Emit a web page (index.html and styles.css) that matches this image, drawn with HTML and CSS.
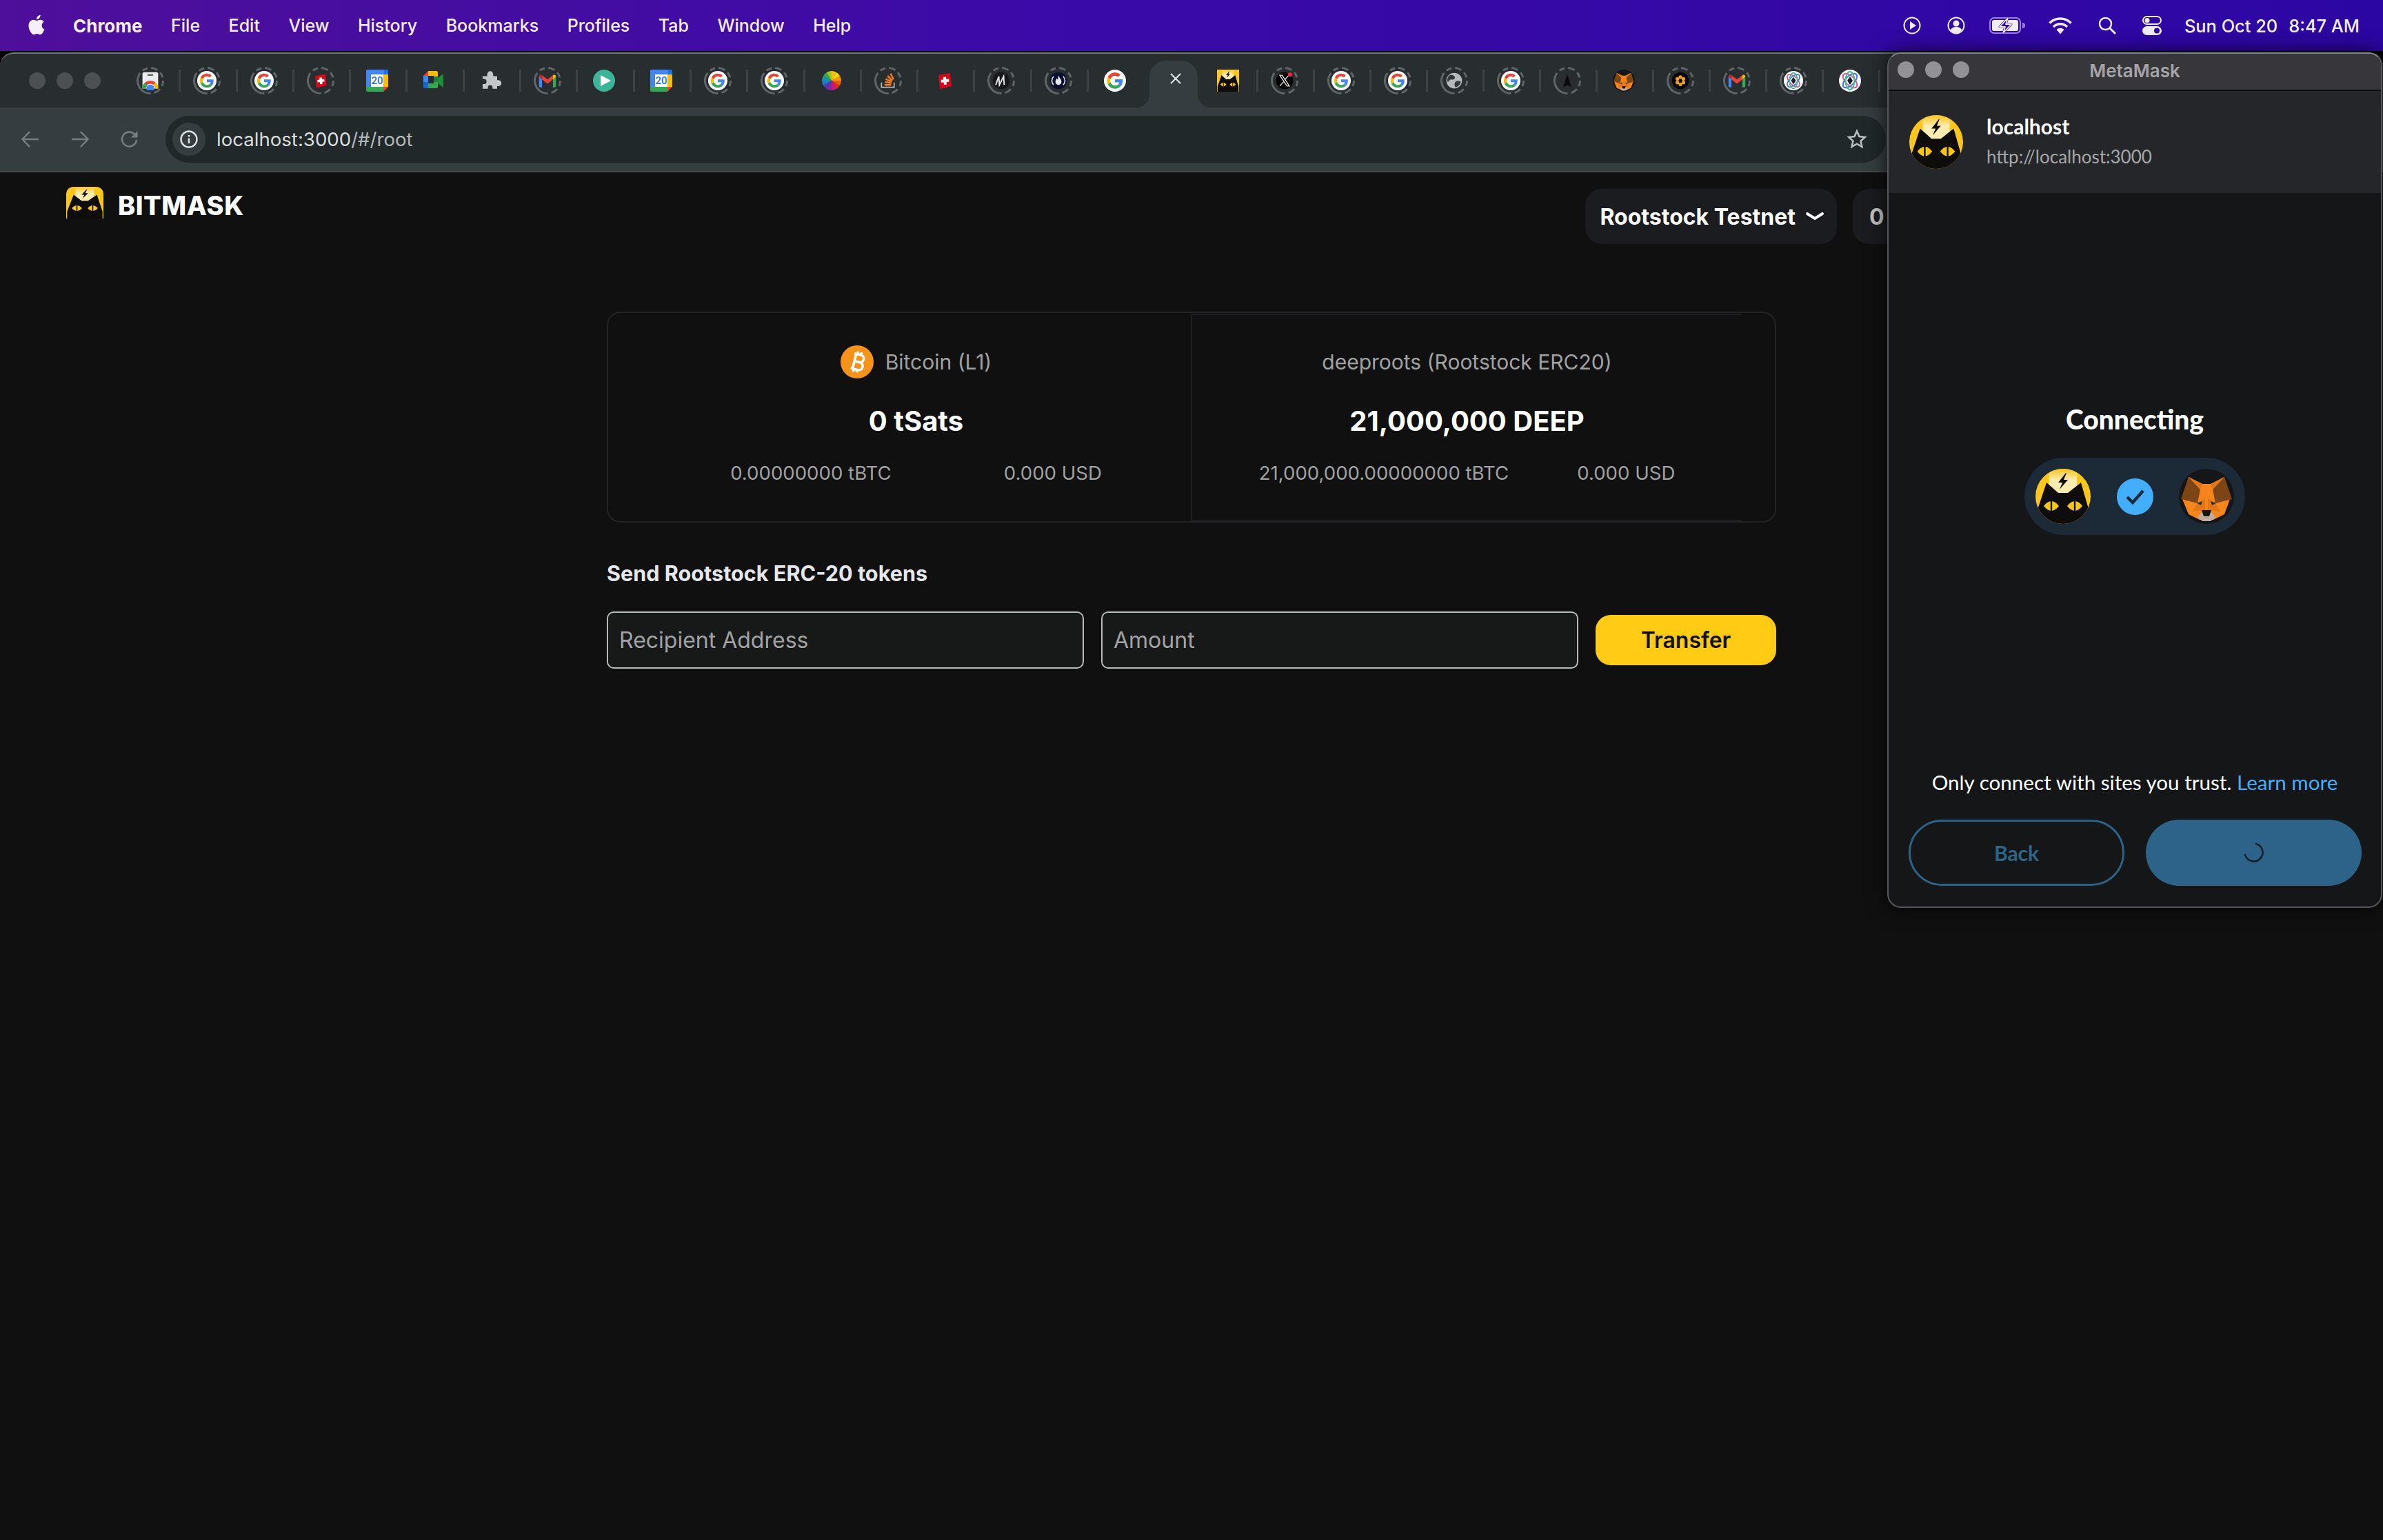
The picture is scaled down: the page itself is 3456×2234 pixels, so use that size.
FILE: index.html
```html
<!DOCTYPE html>
<html lang="en">
<head>
    <meta charset="UTF-8">
    <title>BitMask</title>
    <link rel="stylesheet" href="styles.css">
</head>
<body>
    <!-- shared icons -->
    <svg class="defs" width="0" height="0">
        <symbol id="ring" viewBox="0 0 40 40">
            <circle cx="20" cy="20" r="18.5" fill="none" stroke="#5f6669" stroke-width="3" stroke-dasharray="36 5 8 5 10 5 8 5 8 5 10 5 6 0" transform="rotate(105 20 20)"/>
        </symbol>
        <symbol id="g" viewBox="-9 -9 66 66">
            <circle cx="24" cy="24" r="33" fill="#fff"/>
            <path fill="#EA4335" d="M24 9.5c3.54 0 6.71 1.22 9.21 3.6l6.85-6.85C35.9 2.38 30.47 0 24 0 14.62 0 6.51 5.38 2.56 13.22l7.98 6.19C12.43 13.72 17.74 9.5 24 9.5z"/>
            <path fill="#4285F4" d="M46.98 24.55c0-1.57-.15-3.09-.38-4.55H24v9.02h12.94c-.58 2.96-2.26 5.48-4.78 7.18l7.73 6c4.51-4.18 7.09-10.36 7.09-17.65z"/>
            <path fill="#FBBC05" d="M10.53 28.59c-.48-1.45-.76-2.99-.76-4.59s.27-3.14.76-4.59l-7.98-6.19C.92 16.46 0 20.12 0 24c0 3.88.92 7.54 2.56 10.78l7.97-6.19z"/>
            <path fill="#34A853" d="M24 48c6.48 0 11.93-2.13 15.89-5.81l-7.73-6c-2.15 1.45-4.92 2.3-8.16 2.3-6.26 0-11.57-4.22-13.47-9.91l-7.98 6.19C6.51 42.62 14.62 48 24 48z"/>
        </symbol>
        <symbol id="store" viewBox="0 0 32 32">
            <path fill="#eceff1" d="M6 2h20a3 3 0 0 1 3 3v24H3V5a3 3 0 0 1 3-3z"/>
            <rect x="11" y="5" width="10" height="3" rx="1.5" fill="#5f6368"/>
            <path fill="#ea4335" d="M3 29a13 13 0 0 1 26 0h-5a8 8 0 0 0-16 0z"/>
            <path fill="#fbbc05" d="M21 22l3 7h5a13 13 0 0 0-4-10z"/>
            <path fill="#34a853" d="M3 29a13 13 0 0 1 4-10l4 5-3 5z"/>
            <circle cx="16" cy="29" r="6.5" fill="#4285f4"/>
        </symbol>
        <symbol id="flag" viewBox="0 0 32 32">
            <path fill="#d5091c" d="M7 8l17-3 2 19-17 4z"/>
            <path fill="#fff" d="M14 11l4-.5.3 3.5 3.700-.5.4 4-3.700.4.3 3.600-4 .5-.4-3.600-3.600.4-.4-4 3.700-.4z"/>
        </symbol>
        <symbol id="cal" viewBox="0 0 32 32">
            <path fill="#4285f4" d="M2 0h24v7H7v18H0V2a2 2 0 0 1 2-2z"/>
            <path fill="#1a73e8" d="M26 0h4a2 2 0 0 1 2 2v5h-6z"/>
            <rect x="25" y="7" width="7" height="18" fill="#fbbc04"/>
            <path fill="#34a853" d="M0 25h25v7H2a2 2 0 0 1-2-2z"/>
            <path fill="#ea4335" d="M25 25h7l-7 7z"/>
            <rect x="7" y="7" width="18" height="18" fill="#fff"/>
        </symbol>
        <symbol id="meet" viewBox="0 0 32 32">
            <path fill="#ea4335" d="M8 2L1 9h7z"/>
            <path fill="#4285f4" d="M1 9h7v9H1z"/>
            <path fill="#1967d2" d="M1 18h7v9H3a2 2 0 0 1-2-2z"/>
            <path fill="#fbbc04" d="M8 2h12a2 2 0 0 1 2 2v6h-6V9H8z"/>
            <path fill="#34a853" d="M8 20h8v-2h6v7a2 2 0 0 1-2 2H8z"/>
            <path fill="#1e8e3e" d="M22 12l8-6v20l-8-6z"/>
            <path fill="#188038" d="M16 10h6v8h-6z"/>
        </symbol>
        <symbol id="puzzle" viewBox="0 0 32 32">
            <path fill="#c4c7c9" d="M3 11h7V8a4.500 4.500 0 0 1 9 0v3h6v6h2a4.500 4.500 0 0 1 0 9h-2v4h-7v-2a3.500 3.500 0 0 0-7 0v2H3v-7h2a4 4 0 0 0 0-8H3z" transform="translate(1 -1) scale(.96)"/>
        </symbol>
        <symbol id="gmail" viewBox="0 0 32 32">
            <path fill="#4285f4" d="M2 9a3 3 0 0 1 5-2v20H4a2 2 0 0 1-2-2z"/>
            <path fill="#34a853" d="M30 9a3 3 0 0 0-5-2v20h3a2 2 0 0 0 2-2z"/>
            <path fill="#ea4335" d="M7 7l9 7 9-7v7l-9 7-9-7z"/>
            <path fill="#c5221f" d="M2 9l5 5V7a3 3 0 0 0-5 2z"/>
            <path fill="#fbbc04" d="M25 7v7l5-5a3 3 0 0 0-5-2z"/>
        </symbol>
        <symbol id="play" viewBox="0 0 32 32">
            <circle cx="16" cy="16" r="16" fill="#3cb497"/>
            <path fill="#fff" d="M11 8l15 8-15 8z"/>
        </symbol>
        <symbol id="wheel" viewBox="0 0 32 32">
            <path fill="#f6c400" d="M16 16V2a14 14 0 0 1 7 2z"/>
            <path fill="#ffd800" d="M16 16l7-12a14 14 0 0 1 5 5z"/>
            <path fill="#f59a00" d="M16 16l12-7a14 14 0 0 1 2 7z"/>
            <path fill="#ef5a12" d="M16 16h14a14 14 0 0 1-2 7z"/>
            <path fill="#e02b20" d="M16 16l12 7a14 14 0 0 1-5 5z"/>
            <path fill="#c4187a" d="M16 16l7 12a14 14 0 0 1-7 2z"/>
            <path fill="#7e2aa5" d="M16 16v14a14 14 0 0 1-7-2z"/>
            <path fill="#4a3bb0" d="M16 16L9 28a14 14 0 0 1-5-5z"/>
            <path fill="#2378c8" d="M16 16L4 23a14 14 0 0 1-2-7z"/>
            <path fill="#1c93a8" d="M16 16H2a14 14 0 0 1 2-7z"/>
            <path fill="#3bab4a" d="M16 16L4 9a14 14 0 0 1 5-5z"/>
            <path fill="#9cc821" d="M16 16L9 4a14 14 0 0 1 7-2z"/>
        </symbol>
        <symbol id="so" viewBox="0 0 32 32">
            <path fill="none" stroke="#b7babb" stroke-width="2" d="M5 19v8h21v-8"/>
            <path fill="none" stroke="#e87922" stroke-width="3" d="M10 23h11M10.500 18l11 2M12 13l10 5M15 8l8 8M20 4l5 10"/>
        </symbol>
        <symbol id="m" viewBox="0 0 32 32">
            <circle cx="16" cy="16" r="14" fill="#17181c"/>
            <path fill="none" stroke="#e6e6e6" stroke-width="2.200" d="M7 23l5-14 1 14 7-14 1 14"/>
        </symbol>
        <symbol id="flame" viewBox="0 0 32 32">
            <circle cx="16" cy="16" r="14" fill="#0c1030"/>
            <path fill="none" stroke="#d5d8e4" stroke-width="2" d="M8 9a10 10 0 0 0 0 14M24 9a10 10 0 0 1 0 14"/>
            <path fill="#e8e8f0" d="M16 7c1 4 5 6 5 11a5 5 0 0 1-10 0c0-3 2-4 2-6 1 1 2 2 2 3z"/>
        </symbol>
        <symbol id="x" viewBox="0 0 32 32">
            <circle cx="16" cy="16" r="14" fill="#000"/>
            <path fill="none" stroke="#e8e8e8" stroke-width="1.500" d="M8 7h4l12 18h-4zM23 7L16 15M15 17l-7 8"/>
            <circle cx="25" cy="6" r="3.500" fill="#ee2b36"/>
        </symbol>
        <symbol id="globe" viewBox="0 0 32 32">
            <circle cx="16" cy="16" r="13" fill="#b5b9bb"/>
            <path fill="#33393c" d="M7 8c5-3 9-1 10 2s-3 5-6 4-3 4-6 4c-1-4 0-7 2-10zM18 18c3-2 7-2 9 0-1 5-5 8-9 9-2-3-2-7 0-9z"/>
        </symbol>
        <symbol id="tri" viewBox="0 0 32 32">
            <path fill="#0a0a0a" d="M16 5l7 22-7-4-7 4z"/>
        </symbol>
        <symbol id="flower" viewBox="0 0 32 32">
            <circle cx="16" cy="16" r="14" fill="#050505"/>
            <g fill="#f0a020">
                <circle cx="16" cy="10" r="3"/><circle cx="11" cy="13" r="3"/><circle cx="21" cy="13" r="3"/>
                <circle cx="11" cy="19" r="3"/><circle cx="21" cy="19" r="3"/><circle cx="16" cy="22" r="3"/>
            </g>
        </symbol>
        <symbol id="orbit" viewBox="0 0 32 32">
            <circle cx="16" cy="16" r="16" fill="#fff"/>
            <g fill="none" stroke-width="2">
                <ellipse cx="16" cy="16" rx="13" ry="6.500" stroke="#e25a8f" transform="rotate(45 16 16)"/>
                <ellipse cx="16" cy="16" rx="13" ry="6.500" stroke="#3f7be8" transform="rotate(-45 16 16)"/>
                <ellipse cx="16" cy="16" rx="6.500" ry="13" stroke="#47b98a"/>
            </g>
            <path fill="#1c1c2a" d="M16 10l4 6-4 6-4-6z"/>
        </symbol>
        <symbol id="cat" viewBox="0 0 80 80" preserveAspectRatio="none">
            <defs>
                <linearGradient id="catbg" x1="0" y1="0" x2="0" y2="1">
                    <stop offset="0" stop-color="#fcc419"/>
                    <stop offset=".45" stop-color="#fff0c0"/>
                </linearGradient>
            </defs>
            <rect width="80" height="80" fill="#fcc61b"/>
            <path fill="url(#catbg)" d="M20 0h40v36H20z" opacity=".9"/>
            <path fill="#0e0d0b" d="M2 62L16 20 33 35H47L66 20 78 62V80H2z"/>
            <path fill="#0e0d0b" d="M44 6L33 20h6l-4 10 12-14h-6l4-10z"/>
            <path fill="#f9c614" d="M12 54q11-14 22 0-11 14-22 0zM46 54q11-14 22 0-11 14-22 0z"/>
            <path fill="#0e0d0b" d="M21.800 46h2.400v16h-2.400zM55.800 46h2.400v16h-2.400z"/>
        </symbol>
        <symbol id="fox" viewBox="0 0 80 80">
            <circle cx="40" cy="40" r="40" fill="#141618"/>
            <path fill="#f6851b" d="M14 12L34 22H46L66 12 74 44 66 66 50 74H30L14 66 5 44z"/>
            <path fill="#7d4513" d="M14 12L31 30 27 50 3 44zM66 12L49 30 53 50 77 44z"/>
            <path fill="#e2761b" d="M14 12L34 22 31 30zM66 12L46 22 49 30zM27 50L38 42V60L20 62zM53 50L42 42V60L60 62z"/>
            <path fill="#233447" d="M26 50L34 47 32 53zM54 50L46 47 48 53z"/>
            <path fill="#c0ad9e" d="M27 70L34 62H46L53 70 46 76H34z"/>
            <path fill="#161616" d="M33 60H47L44 69H36z"/>
        </symbol>
    </svg>

    <!-- mac menu bar -->
    <header class="menubar">
        <svg class="apple" viewBox="0 0 24 24"><path fill="#f4effb" d="M18.710 19.500c-.83 1.240-1.710 2.450-3.050 2.470-1.340.03-1.770-.79-3.290-.79-1.530 0-2 .77-3.270.82-1.310.05-2.300-1.320-3.140-2.530C4.250 17 2.940 12.450 4.700 9.390c.87-1.520 2.430-2.480 4.120-2.510 1.280-.02 2.500.87 3.290.87.78 0 2.260-1.070 3.810-.91.65.03 2.470.26 3.640 1.980-.09.06-2.170 1.280-2.150 3.810.03 3.020 2.650 4.030 2.680 4.040-.03.07-.42 1.440-1.380 2.830M13 3.500c.73-.83 1.940-1.460 2.940-1.500.13 1.170-.34 2.350-1.040 3.190-.69.85-1.830 1.510-2.950 1.420-.15-1.150.41-2.350 1.050-3.110z"/></svg>
        <nav class="menu">
            <span class="menu-app">Chrome</span>
            <span>File</span>
            <span>Edit</span>
            <span>View</span>
            <span>History</span>
            <span>Bookmarks</span>
            <span>Profiles</span>
            <span>Tab</span>
            <span>Window</span>
            <span>Help</span>
        </nav>
        <div class="status">
            <svg class="st" viewBox="0 0 28 28"><circle cx="14" cy="14" r="11.500" fill="none" stroke="#f1ecfa" stroke-width="2"/><path fill="#f1ecfa" d="M11 8l9 6-9 6z"/></svg>
            <svg class="st" viewBox="0 0 28 28"><circle cx="14" cy="14" r="11.500" fill="none" stroke="#f1ecfa" stroke-width="2"/><circle cx="14" cy="11" r="4.500" fill="#f1ecfa"/><path fill="#f1ecfa" d="M5.500 21c2-4 5-5 8.500-5s6.500 1 8.500 5a11 11 0 0 1-17 0z"/></svg>
            <svg class="st-bat" viewBox="0 0 52 28"><rect x="1" y="3" width="44" height="22" rx="6" fill="none" stroke="#9a82e0" stroke-width="2"/><rect x="4" y="6" width="38" height="16" rx="3" fill="#f1ecfa"/><path fill="#2f07a5" stroke="#2f07a5" stroke-width="3" stroke-linejoin="round" d="M27 3L15 16h8l-3 9 12-13h-8z"/><path fill="none" stroke="#f1ecfa" stroke-width="1.800" stroke-linejoin="round" d="M27 3L15 16h8l-3 9 12-13h-8z"/><path fill="#9a82e0" d="M48 10a4 4 0 0 1 0 8z"/></svg>
            <svg class="st-wifi" viewBox="0 0 36 28"><path fill="none" stroke="#f1ecfa" stroke-width="3.500" d="M2.500 10.500a22 22 0 0 1 31 0M8 16a14 14 0 0 1 20 0"/><path fill="#f1ecfa" d="M12.500 20a8 8 0 0 1 11 0L18 26.500z"/></svg>
            <svg class="st-search" viewBox="0 0 28 28"><circle cx="11.500" cy="11.500" r="8.500" fill="none" stroke="#f1ecfa" stroke-width="2.500"/><path stroke="#f1ecfa" stroke-width="3" d="M18 18l8 8"/></svg>
            <svg class="st-ctrl" viewBox="0 0 28 28"><rect x="1" y="1" width="26" height="11" rx="5.500" fill="none" stroke="#f1ecfa" stroke-width="2"/><circle cx="7" cy="6.500" r="3.500" fill="#f1ecfa"/><rect y="15" width="28" height="13" rx="6.500" fill="#f1ecfa"/><circle cx="21" cy="21.500" r="4" fill="#2f07a5"/></svg>
            <span class="clock"><span>Sun Oct 20</span><span>8:47 AM</span></span>
        </div>
    </header>

    <!-- chrome window -->
    <div class="browser">
        <div class="tabstrip">
            <div class="lights">
                <span></span><span></span><span></span>
            </div>
            <div class="tabs">
                <div class="tab"><span class="fav"><svg class="ring"><use href="#ring"/></svg><svg class="ico"><use href="#store"/></svg></span></div>
                <div class="tab"><span class="fav"><svg class="ring"><use href="#ring"/></svg><svg class="ico"><use href="#g"/></svg></span></div>
                <div class="tab"><span class="fav"><svg class="ring"><use href="#ring"/></svg><svg class="ico"><use href="#g"/></svg></span></div>
                <div class="tab"><span class="fav"><svg class="ring"><use href="#ring"/></svg><svg class="ico"><use href="#flag"/></svg></span></div>
                <div class="tab"><span class="fav"><svg class="ico big" viewBox="0 0 32 32"><use href="#cal"/><text x="16" y="21" class="cal-num">20</text></svg></span></div>
                <div class="tab"><span class="fav"><svg class="ico big"><use href="#meet"/></svg></span></div>
                <div class="tab"><span class="fav"><svg class="ico big"><use href="#puzzle"/></svg></span></div>
                <div class="tab"><span class="fav"><svg class="ring"><use href="#ring"/></svg><svg class="ico"><use href="#gmail"/></svg></span></div>
                <div class="tab"><span class="fav"><svg class="ico big"><use href="#play"/></svg></span></div>
                <div class="tab"><span class="fav"><svg class="ico big" viewBox="0 0 32 32"><use href="#cal"/><text x="16" y="21" class="cal-num">20</text></svg></span></div>
                <div class="tab"><span class="fav"><svg class="ring"><use href="#ring"/></svg><svg class="ico"><use href="#g"/></svg></span></div>
                <div class="tab"><span class="fav"><svg class="ring"><use href="#ring"/></svg><svg class="ico"><use href="#g"/></svg></span></div>
                <div class="tab"><span class="fav"><svg class="ico big"><use href="#wheel"/></svg></span></div>
                <div class="tab"><span class="fav"><svg class="ring"><use href="#ring"/></svg><svg class="ico"><use href="#so"/></svg></span></div>
                <div class="tab"><span class="fav"><svg class="ico big"><use href="#flag"/></svg></span></div>
                <div class="tab"><span class="fav"><svg class="ring"><use href="#ring"/></svg><svg class="ico"><use href="#m"/></svg></span></div>
                <div class="tab"><span class="fav"><svg class="ring"><use href="#ring"/></svg><svg class="ico"><use href="#flame"/></svg></span></div>
                <div class="tab no-sep"><span class="fav"><svg class="ico big"><use href="#g"/></svg></span></div>
                <div class="tab-active">
                    <svg class="tab-close" viewBox="0 0 16 16"><path stroke="#dfe1e2" stroke-width="2.200" d="M1 1l14 14M15 1L1 15"/></svg>
                </div>
                <div class="tab"><span class="fav"><svg class="ico big"><use href="#cat"/></svg></span></div>
                <div class="tab"><span class="fav"><svg class="ring"><use href="#ring"/></svg><svg class="ico"><use href="#x"/></svg></span></div>
                <div class="tab"><span class="fav"><svg class="ring"><use href="#ring"/></svg><svg class="ico"><use href="#g"/></svg></span></div>
                <div class="tab"><span class="fav"><svg class="ring"><use href="#ring"/></svg><svg class="ico"><use href="#g"/></svg></span></div>
                <div class="tab"><span class="fav"><svg class="ring"><use href="#ring"/></svg><svg class="ico"><use href="#globe"/></svg></span></div>
                <div class="tab"><span class="fav"><svg class="ring"><use href="#ring"/></svg><svg class="ico"><use href="#g"/></svg></span></div>
                <div class="tab"><span class="fav"><svg class="ring"><use href="#ring"/></svg><svg class="ico"><use href="#tri"/></svg></span></div>
                <div class="tab"><span class="fav"><svg class="ico big"><use href="#fox"/></svg></span></div>
                <div class="tab"><span class="fav"><svg class="ring"><use href="#ring"/></svg><svg class="ico"><use href="#flower"/></svg></span></div>
                <div class="tab"><span class="fav"><svg class="ring"><use href="#ring"/></svg><svg class="ico"><use href="#gmail"/></svg></span></div>
                <div class="tab"><span class="fav"><svg class="ring"><use href="#ring"/></svg><svg class="ico"><use href="#orbit"/></svg></span></div>
                <div class="tab"><span class="fav"><svg class="ico big"><use href="#orbit"/></svg></span></div>
            </div>
        </div>

        <div class="toolbar">
            <svg class="nav-btn" viewBox="0 0 28 28"><path fill="none" stroke="#787e80" stroke-width="2.500" d="M26 14H3M13 3L2.500 14 13 25"/></svg>
            <svg class="nav-btn" viewBox="0 0 28 28"><path fill="none" stroke="#787e80" stroke-width="2.500" d="M2 14h23M15 3l10.500 11L15 25"/></svg>
            <svg class="nav-btn" viewBox="0 0 28 28"><path fill="none" stroke="#787e80" stroke-width="2.500" d="M24 15a10.500 10.500 0 1 1-3-8.500L25 10"/><path fill="#787e80" d="M25.500 2v9.500H16z"/></svg>
            <div class="omnibox">
                <span class="site-info">
                    <svg viewBox="0 0 28 28"><circle cx="14" cy="14" r="11.500" fill="none" stroke="#e0e2e3" stroke-width="2.400"/><path fill="#e0e2e3" d="M12.700 12.500h2.600V20h-2.600zM12.700 8h2.600v2.600h-2.600z"/></svg>
                </span>
                <span class="url">localhost:3000<span class="url-path">/#/root</span></span>
                <svg class="star" viewBox="0 0 28 28"><path fill="none" stroke="#b9bdbe" stroke-width="2.400" d="M14 3l3.300 7.300 7.700.8-5.800 5.300 1.700 7.800L14 20.200 7.100 24.200l1.700-7.800L3 11.100l7.700-.8z"/></svg>
            </div>
        </div>

        <div class="page">
            <div class="page-header">
                <div class="logo">
                    <svg class="logo-icon"><use href="#cat"/></svg>
                    <span class="logo-text">BITMASK</span>
                </div>
                <button class="network">
                    Rootstock Testnet
                    <svg viewBox="0 0 28 16"><path fill="none" stroke="#fff" stroke-width="4" stroke-linecap="round" d="M3 4l11 7 11-7"/></svg>
                </button>
                <button class="balance">0</button>
            </div>

            <main class="content">
                <section class="card">
                    <div class="col col-left">
                        <div class="col-title">
                            <svg class="btc" viewBox="0 0 48 48">
                                <circle cx="24" cy="24" r="24" fill="#f7931a"/>
                                <g transform="rotate(14 24 24)" fill="none" stroke="#fff" stroke-width="3.600">
                                    <path d="M17 13h10a5.400 5.400 0 0 1 0 10.800H19M19 23.800h9a5.600 5.600 0 0 1 0 11.200H17M20 13v22M22 9v4M27 9v4M22 35v4M27 35v4"/>
                                </g>
                            </svg>
                            <span>Bitcoin (L1)</span>
                        </div>
                        <div class="amount">0 tSats</div>
                        <div class="sub sub-left">
                            <span>0.00000000 tBTC</span>
                            <span>0.000 USD</span>
                        </div>
                    </div>
                    <div class="col col-right">
                        <div class="col-title"><span>deeproots (Rootstock ERC20)</span></div>
                        <div class="amount">21,000,000 DEEP</div>
                        <div class="sub sub-right">
                            <span>21,000,000.00000000 tBTC</span>
                            <span>0.000 USD</span>
                        </div>
                    </div>
                </section>

                <h2 class="send-title">Send Rootstock ERC-20 tokens</h2>
                <form class="send-form">
                    <input type="text" placeholder="Recipient Address">
                    <input type="text" placeholder="Amount">
                    <button type="button" class="transfer">Transfer</button>
                </form>
            </main>
        </div>
    </div>

    <!-- metamask popup -->
    <aside class="popup">
        <div class="popup-bar">
            <div class="popup-lights"><span></span><span></span><span></span></div>
            <span class="popup-title">MetaMask</span>
        </div>
        <div class="origin">
            <svg class="origin-icon"><use href="#cat"/></svg>
            <div>
                <div class="origin-name">localhost</div>
                <div class="origin-url">http://localhost:3000</div>
            </div>
        </div>
        <div class="connecting">
            <h1>Connecting</h1>
            <div class="pill">
                <svg class="pill-icon"><use href="#cat"/></svg>
                <svg class="pill-check" viewBox="0 0 53 53">
                    <circle cx="26.500" cy="26.500" r="26.500" fill="#43aefc"/>
                    <path fill="none" stroke="#1c2a38" stroke-width="4.500" d="M15 27l8 8 15-17"/>
                </svg>
                <svg class="pill-fox"><use href="#fox"/></svg>
            </div>
        </div>
        <p class="trust">Only connect with sites you trust. <a>Learn more</a></p>
        <div class="popup-actions">
            <button class="btn-back">Back</button>
            <button class="btn-confirm">
                <svg viewBox="0 0 32 32"><path fill="none" stroke="#14212c" stroke-width="2.600" stroke-linecap="round" d="M19 3a13 13 0 1 1-16 16"/></svg>
            </button>
        </div>
    </aside>
</body>
</html>
```

FILE: styles.css
```css
html, body {
    margin: 0;
    height: 2234px;
    overflow: hidden;
    background: #000;
    font-family: Inter, "Liberation Sans", sans-serif;
}
.defs {
    display: block;
    height: 0;
}
.cal-num {
    font-family: Roboto, sans-serif;
    font-size: 15px;
    font-weight: 500;
    fill: #1a73e8;
    text-anchor: middle;
}

/* menu bar */
.menubar {
    display: flex;
    align-items: center;
    height: 74px;
    background: linear-gradient(90deg, #4e0f9b 0%, #3a0aa8 45%, #2c06a3 100%);
    color: #f4effb;
    font-size: 25px;
    font-weight: 500;
}
.apple {
    width: 34px;
    height: 34px;
    margin-left: 36px;
    margin-top: -2px;
}
.menu {
    display: flex;
    align-items: center;
    gap: 41.5px;
    margin-left: 36px;
}
.menu-app {
    font-size: 26px;
    font-weight: 700;
}
.status {
    display: flex;
    align-items: center;
    margin-left: auto;
    margin-right: 34px;
}
.st {
    width: 28px;
    height: 28px;
    margin-right: 36px;
}
.st + .st {
    margin-right: 34px;
}
.st-bat {
    width: 52px;
    height: 28px;
    margin-right: 33px;
}
.st-wifi {
    width: 36px;
    height: 28px;
    margin-right: 36px;
}
.st-search {
    width: 28px;
    height: 28px;
    margin-right: 37px;
}
.st-ctrl {
    width: 28px;
    height: 28px;
    margin-right: 33px;
}
.clock {
    display: flex;
    gap: 16px;
    font-size: 25.4px;
}

/* chrome */
.browser {
    display: flex;
    flex-direction: column;
    height: 2158px;
    margin-top: 2px;
    border-top: 2px solid #74787b;
    border-radius: 20px 20px 0 0;
    background: #282d30;
    overflow: hidden;
    box-sizing: border-box;
}
.tabstrip {
    display: flex;
    height: 78px;
    flex-shrink: 0;
}
.lights {
    display: flex;
    align-items: center;
    gap: 16px;
    padding-left: 42px;
    width: 138px;
    height: 78px;
}
.lights span {
    width: 24px;
    height: 24px;
    border-radius: 50%;
    background: #4c5053;
}
.tabs {
    display: flex;
}
.tab {
    display: flex;
    align-items: center;
    justify-content: space-between;
    width: 82.3px;
    padding-left: 18px;
    box-sizing: border-box;
}
.tab-active ~ .tab {
    width: 82px;
}
.tab::after {
    content: "";
    width: 3px;
    height: 32px;
    background: #3c4245;
}
.tab.no-sep::after {
    background: none;
}
.fav {
    display: grid;
    place-items: center;
    width: 40px;
    height: 40px;
}
.fav svg {
    grid-area: 1 / 1;
}
.ring {
    width: 40px;
    height: 40px;
}
.ico {
    width: 28px;
    height: 28px;
}
.ico.big {
    width: 32px;
    height: 32px;
}
.tab-active {
    position: relative;
    display: flex;
    align-items: center;
    width: 70px;
    margin: 10px 6px 0 6px;
    padding-left: 30px;
    box-sizing: border-box;
    background: #363d40;
    border-radius: 24px 24px 0 0;
}
.tab-active::before,
.tab-active::after {
    content: "";
    position: absolute;
    bottom: 0;
    width: 20px;
    height: 20px;
}
.tab-active::before {
    left: -20px;
    background: radial-gradient(circle at 0 0, transparent 20px, #363d40 20.5px);
}
.tab-active::after {
    right: -20px;
    background: radial-gradient(circle at 100% 0, transparent 20px, #363d40 20.5px);
}
.tab-close {
    width: 16px;
    height: 16px;
    margin-top: -16px;
}
.toolbar {
    display: flex;
    align-items: center;
    height: 94px;
    flex-shrink: 0;
    padding-left: 30px;
    box-sizing: border-box;
    background: #363d40;
    border-bottom: 2px solid #45494b;
}
.nav-btn {
    width: 28px;
    height: 28px;
    margin-right: 44px;
}
.nav-btn:nth-child(3) {
    margin-right: 38px;
}
.omnibox {
    display: flex;
    align-items: center;
    width: 2495px;
    height: 68px;
    padding: 0 24px 0 10px;
    box-sizing: border-box;
    background: #212829;
    border-radius: 34px;
}
.site-info {
    display: flex;
    align-items: center;
    justify-content: center;
    width: 48px;
    height: 48px;
    border-radius: 50%;
    background: #363d40;
}
.site-info svg {
    width: 28px;
    height: 28px;
}
.url {
    margin-left: 16px;
    font-size: 27.6px;
    color: #d9dcdd;
}
.url-path {
    color: #b4b8b9;
}
.star {
    width: 30px;
    height: 30px;
    margin-left: auto;
    margin-right: 3px;
}

/* page */
.page {
    flex: 1;
    background: #101010;
}
.page-header {
    display: flex;
    align-items: flex-start;
    padding: 21px 96px 0 96px;
    height: 202px;
    box-sizing: border-box;
}
.logo {
    display: flex;
    align-items: flex-start;
    gap: 21px;
}
.logo-icon {
    width: 54px;
    height: 46px;
    border-radius: 10px 10px 0 0;
}
.logo-text {
    margin-top: 4px;
    font-size: 38px;
    font-weight: 800;
    letter-spacing: .5px;
    color: #fff;
}
.network, .balance {
    height: 80px;
    margin-top: 3px;
    border: none;
    border-radius: 24px;
    background: #1b1c1f;
    color: #fff;
    font-family: inherit;
    font-size: 32px;
    font-weight: 700;
}
.network {
    display: flex;
    align-items: center;
    gap: 14px;
    margin-left: auto;
    padding: 0 18px 0 21px;
}
.network svg {
    width: 28px;
    height: 16px;
}
.balance {
    width: 673px;
    margin-left: 23px;
    padding-left: 24px;
    text-align: left;
    color: #c4c4c4;
}
.content {
    width: 1696px;
    margin: 0 auto;
}
.card {
    display: flex;
    height: 306px;
    padding: 0 48px;
    box-sizing: border-box;
    border: 2px solid #232427;
    border-radius: 20px;
}
.col {
    flex: 1;
    display: flex;
    flex-direction: column;
    align-items: center;
}
.col-right {
    border-left: 2px solid #1c1d1f;
    border-top: 2px solid #1c1d1f;
    border-bottom: 2px solid #1c1d1f;
    margin-top: 1px;
}
.col-right .col-title {
    margin-top: 44px;
}
.col-title {
    display: flex;
    align-items: center;
    gap: 17px;
    height: 48px;
    margin-top: 47px;
    font-size: 30px;
    color: #a0a1a3;
}
.btc {
    width: 48px;
    height: 48px;
}
.amount {
    margin-top: 37px;
    font-size: 40px;
    font-weight: 700;
    color: #fff;
}
.sub {
    display: flex;
    margin-top: 34px;
    font-size: 27.6px;
    color: #a0a1a3;
}
.sub-left {
    gap: 163px;
}
.sub-right {
    gap: 99px;
}
.send-title {
    margin: 55px 0 0 0;
    font-size: 30.6px;
    font-weight: 700;
    color: #e5e7eb;
}
.send-form {
    display: flex;
    align-items: center;
    gap: 25px;
    margin-top: 37px;
}
.send-form input {
    width: 692px;
    height: 83px;
    padding: 0 16px;
    box-sizing: border-box;
    border: 2px solid #b8b9ba;
    border-radius: 10px;
    background: #171818;
    font-family: inherit;
    font-size: 32px;
}
.send-form input::placeholder {
    color: #a2a3a5;
}
.transfer {
    width: 262px;
    height: 73px;
    border: none;
    border-radius: 22px;
    background: #ffcb14;
    color: #111;
    font-family: inherit;
    font-size: 32px;
    font-weight: 600;
}

/* metamask window */
.popup {
    position: absolute;
    left: 2737px;
    top: 76px;
    display: flex;
    flex-direction: column;
    width: 718px;
    height: 1241px;
    box-sizing: border-box;
    background: #141618;
    border: 2px solid #55565a;
    border-top-color: #85868a;
    border-radius: 20px;
    box-shadow: 0 0 30px rgba(0,0,0,.75);
    overflow: hidden;
    font-family: Lato, sans-serif;
    color: #fff;
}
.popup-bar {
    display: flex;
    align-items: center;
    justify-content: center;
    position: relative;
    flex-shrink: 0;
    height: 54px;
    padding-bottom: 3px;
    box-sizing: border-box;
    background: #36363b;
    border-bottom: 2px solid #0c0c0d;
}
.popup-lights {
    position: absolute;
    left: 13px;
    top: 11px;
    display: flex;
    gap: 16px;
}
.popup-lights span {
    width: 24px;
    height: 24px;
    border-radius: 50%;
    background: #929296;
}
.popup-title {
    font-family: Inter, sans-serif;
    font-size: 26px;
    font-weight: 600;
    color: #a5a5a8;
}
.origin {
    display: flex;
    align-items: center;
    gap: 34px;
    flex-shrink: 0;
    height: 148px;
    padding-left: 30px;
    background: #25262a;
}
.origin-icon {
    width: 78px;
    height: 78px;
    border-radius: 50%;
}
.origin-name {
    margin-top: -4px;
    font-size: 30px;
    font-weight: 700;
}
.origin-url {
    margin-top: 10px;
    font-size: 26px;
    color: #a5a6a8;
}
.connecting {
    display: flex;
    flex-direction: column;
    align-items: center;
    flex: 1;
}
.connecting h1 {
    margin: 306px 0 0 0;
    font-size: 39px;
    font-weight: 900;
    line-height: 44px;
}
.pill {
    display: flex;
    align-items: center;
    justify-content: space-between;
    width: 320px;
    height: 112px;
    margin-top: 34px;
    padding: 0 16px;
    box-sizing: border-box;
    border-radius: 56px;
    background: #1c2a38;
}
.pill-icon {
    width: 80px;
    height: 80px;
    border-radius: 50%;
}
.pill-check {
    width: 53px;
    height: 53px;
}
.pill-fox {
    width: 80px;
    height: 80px;
}
.trust {
    margin: 0;
    text-align: center;
    font-size: 29.6px;
    line-height: 40px;
}
.trust a {
    color: #43aefc;
}
.popup-actions {
    display: flex;
    justify-content: space-between;
    margin-top: 34px;
    padding: 0 28px 30px 29px;
}
.btn-back, .btn-confirm {
    width: 313px;
    height: 96px;
    border-radius: 48px;
    font-family: Lato, sans-serif;
    font-size: 30px;
    font-weight: 700;
}
.btn-back {
    border: 3px solid #2c6288;
    background: none;
    color: #2d6489;
}
.btn-confirm {
    display: flex;
    align-items: center;
    justify-content: center;
    border: none;
    background: #2d6389;
}
.btn-confirm svg {
    width: 32px;
    height: 32px;
}
```
